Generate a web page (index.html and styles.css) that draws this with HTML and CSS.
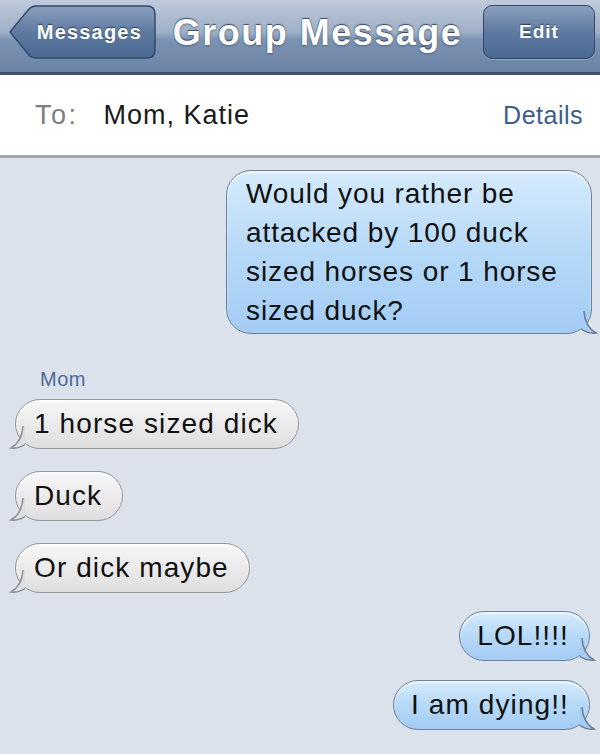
FILE: index.html
```html
<!DOCTYPE html>
<html>
<head>
<meta charset="utf-8">
<link rel="stylesheet" href="styles.css">
</head>
<body>
<div class="phone">
  <header class="nav">
    <div class="back-btn">
      <svg class="back-shape" width="148" height="54" viewBox="0 0 148 54">
        <defs>
          <linearGradient id="bg1" x1="0" y1="0" x2="0" y2="1">
            <stop offset="0" stop-color="#8aa0bf"/>
            <stop offset="0.5" stop-color="#5f7aa1"/>
            <stop offset="1" stop-color="#4a6891"/>
          </linearGradient>
        </defs>
        <path d="M2 27 L21 4 Q24 1 28 1 L139 1 Q147 1 147 9 L147 45 Q147 53 139 53 L28 53 Q24 53 21 50 Z" fill="url(#bg1)" stroke="#34496b" stroke-width="1.5"/>
      </svg>
      <span class="btn-label">Messages</span>
    </div>
    <h1 class="title">Group Message</h1>
    <div class="edit-btn"><span class="btn-label">Edit</span></div>
  </header>
  <div class="to-bar">
    <span class="to-label">To:</span>
    <span class="to-names">Mom, Katie</span>
    <span class="details">Details</span>
  </div>
  <main class="thread">
    <div class="row right">
      <div class="bubble blue big">Would you rather be<br>attacked by 100 duck<br>sized horses or 1 horse<br>sized duck?
        <svg class="tail tail-r" width="22" height="24" viewBox="0 0 22 24"><path d="M0 0 L2 0 Q3 16 14 22 Q5 23 -2 17 Z" fill="#a5cdf5"/><path d="M2 0 Q3 16 14 22 Q6 23 -1 18" fill="none" stroke="#6a7c92" stroke-width="1.5"/></svg>
      </div>
    </div>
    <div class="sender">Mom</div>
    <div class="row left">
      <div class="bubble gray">1 horse sized dick
        <svg class="tail tail-l" width="22" height="24" viewBox="0 0 22 24"><path d="M22 0 L20 0 Q19 16 8 22 Q17 23 24 17 Z" fill="#e0e0e0"/><path d="M20 0 Q19 16 8 22 Q16 23 23 18" fill="none" stroke="#8f8f8f" stroke-width="1.5"/></svg>
      </div>
    </div>
    <div class="row left">
      <div class="bubble gray">Duck
        <svg class="tail tail-l" width="22" height="24" viewBox="0 0 22 24"><path d="M22 0 L20 0 Q19 16 8 22 Q17 23 24 17 Z" fill="#e0e0e0"/><path d="M20 0 Q19 16 8 22 Q16 23 23 18" fill="none" stroke="#8f8f8f" stroke-width="1.5"/></svg>
      </div>
    </div>
    <div class="row left">
      <div class="bubble gray">Or dick maybe
        <svg class="tail tail-l" width="22" height="24" viewBox="0 0 22 24"><path d="M22 0 L20 0 Q19 16 8 22 Q17 23 24 17 Z" fill="#e0e0e0"/><path d="M20 0 Q19 16 8 22 Q16 23 23 18" fill="none" stroke="#8f8f8f" stroke-width="1.5"/></svg>
      </div>
    </div>
    <div class="row right">
      <div class="bubble blue">LOL!!!!
        <svg class="tail tail-r" width="22" height="24" viewBox="0 0 22 24"><path d="M0 0 L2 0 Q3 16 14 22 Q5 23 -2 17 Z" fill="#a5cdf5"/><path d="M2 0 Q3 16 14 22 Q6 23 -1 18" fill="none" stroke="#6a7c92" stroke-width="1.5"/></svg>
      </div>
    </div>
    <div class="row right">
      <div class="bubble blue">I am dying!!
        <svg class="tail tail-r" width="22" height="24" viewBox="0 0 22 24"><path d="M0 0 L2 0 Q3 16 14 22 Q5 23 -2 17 Z" fill="#a5cdf5"/><path d="M2 0 Q3 16 14 22 Q6 23 -1 18" fill="none" stroke="#6a7c92" stroke-width="1.5"/></svg>
      </div>
    </div>
  </main>
</div>
</body>
</html>
```
FILE: styles.css
```css
* { box-sizing: border-box; }
html, body { margin: 0; padding: 0; }
body {
  width: 600px;
  height: 754px;
  overflow: hidden;
  background: #dbe2eb;
  font-family: "Liberation Sans", Arial, sans-serif;
}
.phone { width: 600px; height: 754px; display: flex; flex-direction: column; }

.nav {
  height: 75px;
  background: linear-gradient(#bfcadb 0%, #9eafc7 45%, #7c93b3 55%, #6b83a5 100%);
  border-bottom: 3px solid #3e5170;
  display: flex;
  align-items: center;
  padding: 0 5px 8px 8px;
}
.back-btn {
  position: relative;
  width: 148px;
  height: 54px;
  display: flex;
  align-items: center;
  justify-content: flex-end;
  padding-right: 14px;
}
.back-shape { position: absolute; left: 0; top: 0; }
.btn-label {
  position: relative;
  color: #fff;
  font-weight: bold;
  font-size: 20px;
  letter-spacing: 1.2px;
  text-shadow: 0 -1px 1px rgba(20, 35, 60, 0.7);
}
.edit-btn .btn-label { font-size: 19px; letter-spacing: 1px; }
.title {
  flex: 1;
  margin: 0;
  text-align: center;
  color: #fff;
  font-size: 36px;
  font-weight: bold;
  letter-spacing: 1.5px;
  text-shadow: 0 -1px 1px rgba(30, 45, 70, 0.8), 0 1px 2px rgba(40, 55, 80, 0.5);
  padding: 2px 4px 0 0;
}
.edit-btn {
  width: 112px;
  height: 54px;
  border-radius: 9px;
  border: 1.5px solid #34496b;
  background: linear-gradient(#8aa0bf 0%, #5f7aa1 50%, #4a6891 100%);
  display: flex;
  align-items: center;
  justify-content: center;
  box-shadow: 0 1px 0 rgba(255,255,255,0.25);
}

.to-bar {
  height: 83px;
  background: #fff;
  border-bottom: 3px solid #a3a6aa;
  display: flex;
  align-items: center;
  padding: 0 17px 0 35px;
  font-size: 27px;
  letter-spacing: 1px;
}
.to-label { color: #7e7e7e; margin-right: 25px; letter-spacing: 2.5px; }
.to-names { color: #1a1a1a; flex: 1; }
.details { color: #3c5c90; font-size: 25px; letter-spacing: 0.5px; }

.thread {
  flex: 1;
  display: flex;
  flex-direction: column;
  padding: 12px 10px 0 15px;
}
.row { display: flex; }
.row.right { justify-content: flex-end; }
.row.left { justify-content: flex-start; }

.bubble {
  position: relative;
  font-size: 28px;
  letter-spacing: 1.1px;
  line-height: 38px;
  color: #111;
  border-radius: 25px;
  padding: 5px 20px;
  white-space: nowrap;
}
.bubble.blue {
  background: linear-gradient(#d6ebfc 0%, #b6d9f8 50%, #a3ccf4 100%);
  border: 1.5px solid #6f8299;
  box-shadow: inset 0 2px 2px rgba(255,255,255,0.7);
  padding: 5px 20px 5px 17px;
}
.bubble.gray {
  background: linear-gradient(#f6f6f6 0%, #ebebeb 50%, #dedede 100%);
  border: 1.5px solid #979797;
  box-shadow: inset 0 2px 2px rgba(255,255,255,0.8);
  padding: 5px 20px 5px 18px;
}
.bubble.big {
  width: 366px;
  line-height: 39px;
  letter-spacing: 0.9px;
  padding: 3px 10px 3px 19px;
  margin-right: -2px;
}
.tail { position: absolute; bottom: -2px; }
.tail-r { right: -13px; }
.tail-l { left: -13px; }

.sender {
  color: #4a6a9b;
  font-size: 20px;
  letter-spacing: 0.5px;
  margin: 34px 0 8px 25px;
}
.row.left + .row.left { margin-top: 22px; }
.row.left + .row.right { margin-top: 18px; }
.row.right + .row.right { margin-top: 19px; }
```
